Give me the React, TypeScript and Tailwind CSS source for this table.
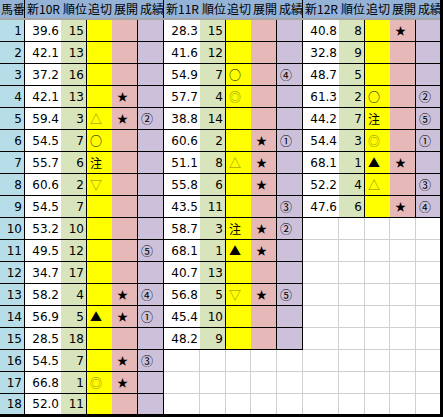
import React from "react";

type Row = [string, string, string, string, string];

const RACES: { name: string; rows: Row[] }[] = [
  {
    name: "新10R",
    rows: [
      ["39.6", "15", "", "", ""],
      ["42.1", "13", "", "", ""],
      ["37.2", "16", "", "", ""],
      ["42.1", "13", "", "★", ""],
      ["59.4", "3", "△", "★", "②"],
      ["54.5", "7", "○", "", ""],
      ["55.7", "6", "注", "", ""],
      ["60.6", "2", "▽", "", ""],
      ["54.5", "7", "", "", ""],
      ["53.2", "10", "", "", ""],
      ["49.5", "12", "", "", "⑤"],
      ["34.7", "17", "", "", ""],
      ["58.2", "4", "", "★", "④"],
      ["56.9", "5", "▲", "★", "①"],
      ["28.5", "18", "", "", ""],
      ["54.5", "7", "", "★", "③"],
      ["66.8", "1", "◎", "★", ""],
      ["52.0", "11", "", "", ""],
    ],
  },
  {
    name: "新11R",
    rows: [
      ["28.3", "15", "", "", ""],
      ["41.6", "12", "", "", ""],
      ["54.9", "7", "○", "", "④"],
      ["57.7", "4", "◎", "", ""],
      ["38.8", "14", "", "", ""],
      ["60.6", "2", "", "★", "①"],
      ["51.1", "8", "△", "★", ""],
      ["55.8", "6", "", "★", ""],
      ["43.5", "11", "", "", "③"],
      ["58.7", "3", "注", "★", "②"],
      ["68.1", "1", "▲", "★", ""],
      ["40.7", "13", "", "", ""],
      ["56.8", "5", "▽", "★", "⑤"],
      ["45.4", "10", "", "", ""],
      ["48.2", "9", "", "", ""],
    ],
  },
  {
    name: "新12R",
    rows: [
      ["40.8", "8", "", "★", ""],
      ["32.8", "9", "", "", ""],
      ["48.7", "5", "", "", ""],
      ["61.3", "2", "○", "", "②"],
      ["44.2", "7", "注", "", "⑤"],
      ["54.4", "3", "◎", "", "①"],
      ["68.1", "1", "▲", "★", ""],
      ["52.2", "4", "△", "", "③"],
      ["47.6", "6", "", "★", "④"],
    ],
  },
];

const ROWS = 18;
const JP = "font-['Noto_Sans_CJK_JP',sans-serif]";

function markColor(m: string): string {
  if (m === "◎") return "text-[#8c8c00] text-[10px]";
  if (m === "△" || m === "▽") return "text-[#8a8a00]";
  return "text-black";
}

function RaceCells({ row, last, bottom }: { row?: Row; last: boolean; bottom: boolean }) {
  const rb = bottom ? "" : row ? "border-b border-black" : "border-b border-[#d0d0d0]";
  if (!row) {
    return (
      <>
        <div className={`w-[36px] h-full border-r border-[#d0d0d0] ${rb}`} />
        <div className={`w-[26px] h-full border-r border-[#d0d0d0] ${rb}`} />
        <div className={`w-[25px] h-full border-r border-[#d0d0d0] ${rb}`} />
        <div className={`w-[26px] h-full border-r border-[#d0d0d0] ${rb}`} />
        {last ? (
          <div className={`w-[24px] h-full ${rb}`} />
        ) : (
          <div className={`w-[26px] h-full border-r border-[#d0d0d0] ${rb}`} />
        )}
      </>
    );
  }
  const [val, rank, oi, ten, sei] = row;
  return (
    <>
      <div className={`w-[36px] h-full bg-white flex items-center justify-end pr-[2px] ${rb}`}>{val}</div>
      <div className={`w-[26px] h-full bg-[#d8e4bc] border-r border-black flex items-center justify-end pr-[2px] ${rb}`}>
        {rank}
      </div>
      <div className={`w-[25px] h-full bg-[#ffff00] flex items-center pl-[3px] ${JP} text-[12px] ${markColor(oi)} ${rb}`}>
        {oi}
      </div>
      <div className={`w-[26px] h-full bg-[#e6b8b7] border-r border-black flex items-center pl-[5px] ${JP} text-[11px] ${rb}`}>
        {ten}
      </div>
      <div
        className={`${last ? "w-[24px]" : "w-[26px] border-r border-black"} h-full bg-[#ccc0da] flex items-center pl-[3px] ${JP} text-[12px] ${rb}`}
      >
        {sei}
      </div>
    </>
  );
}

export default function App() {
  const heads = ["新10R", "順位", "追切", "展開", "成績"];
  return (
    <div className="w-[443px] h-[417px] bg-white border-r-[3px] border-b-[3px] border-black font-['DejaVu_Sans',sans-serif] text-[12px] text-black overflow-hidden">
      {/* header */}
      <div className={`flex h-[20px] bg-[#95b3d7] border-b-2 border-[#a6a6a6] ${JP} text-[12px] leading-[17px]`}>
        <div className="w-[25px] border-r border-black pl-[1px] overflow-hidden whitespace-nowrap">馬番</div>
        {RACES.map((race, bi) => (
          <React.Fragment key={race.name}>
            <div className="w-[36px] pl-[2px] overflow-hidden whitespace-nowrap">{race.name}</div>
            <div className="w-[26px] pl-[2px] overflow-hidden whitespace-nowrap">{heads[1]}</div>
            <div className="w-[25px] pl-[1px] overflow-hidden whitespace-nowrap">{heads[2]}</div>
            <div className="w-[26px] pl-[2px] overflow-hidden whitespace-nowrap">{heads[3]}</div>
            <div
              className={`${bi === 2 ? "w-[24px]" : "w-[26px] border-r border-black"} pl-[2px] overflow-hidden whitespace-nowrap`}
            >
              {heads[4]}
            </div>
          </React.Fragment>
        ))}
      </div>
      {/* rows */}
      {Array.from({ length: ROWS }, (_, i) => {
        const bottom = i === ROWS - 1;
        return (
          <div key={i} className={`flex ${bottom ? "h-[20px]" : "h-[22px]"}`}>
            <div
              className={`w-[25px] h-full bg-[#b7dee8] border-r border-black flex items-center justify-end pr-[2px] ${bottom ? "" : "border-b"}`}
            >
              {i + 1}
            </div>
            {RACES.map((race, bi) => (
              <RaceCells key={race.name} row={race.rows[i]} last={bi === 2} bottom={bottom} />
            ))}
          </div>
        );
      })}
    </div>
  );
}
